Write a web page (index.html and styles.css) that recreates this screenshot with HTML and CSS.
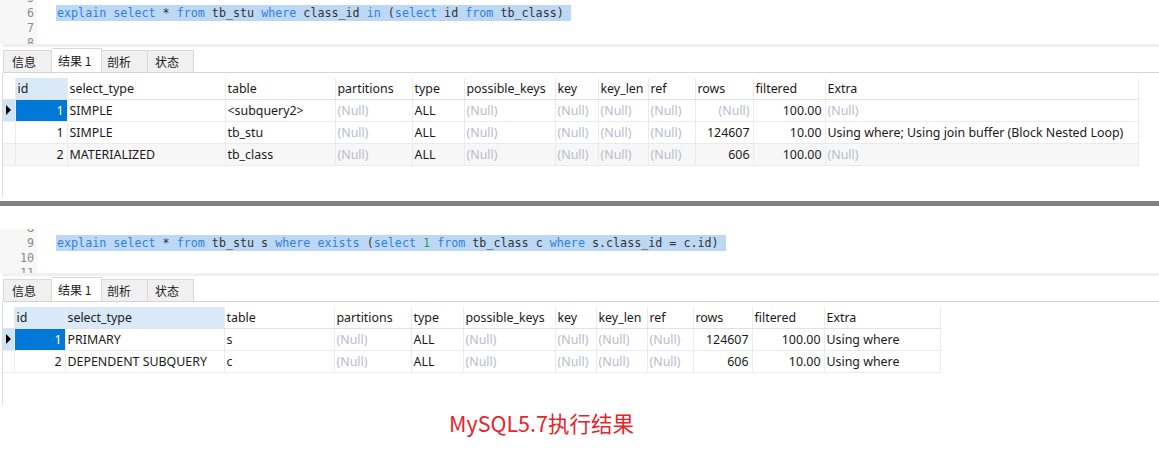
FILE: index.html
```html
<!DOCTYPE html>
<html>
    <head>
        <meta charset="utf-8">
        <title>explain 执行结果</title>
        <link rel="stylesheet" href="styles.css">
    </head>
    <body>

        <div class="panel p1">
            <div class="editor">
                <div class="lines">
                    <div class="line"><span class="num">5</span><span class="code"></span></div>
                    <div class="line"><span class="num">6</span><span class="code"><span class="sel"><b>explain</b> <b>select</b> * <b>from</b> tb_stu <b>where</b> class_id <b>in</b> (<b>select</b> id <b>from</b> tb_class) </span></span></div>
                    <div class="line"><span class="num">7</span><span class="code"></span></div>
                    <div class="line"><span class="num">8</span><span class="code"></span></div>
                </div>
            </div>
            <div class="band"></div>
            <div class="tabs">
                <span class="tab t1">信息</span>
                <span class="tab t2 on">结果 1</span>
                <span class="tab t3">剖析</span>
                <span class="tab t4">状态</span>
            </div>
            <div class="result">
                <table class="grid g1">
                    <colgroup>
                        <col style="width:12px"><col style="width:52px"><col style="width:158px"><col style="width:110px">
                        <col style="width:77px"><col style="width:52px"><col style="width:91px"><col style="width:43px">
                        <col style="width:50px"><col style="width:47px"><col style="width:58px"><col style="width:72px">
                        <col style="width:313px">
                    </colgroup>
                    <thead>
                        <tr>
                            <th class="ind"></th><th class="hl">id</th><th>select_type</th><th>table</th><th>partitions</th><th>type</th>
                            <th>possible_keys</th><th>key</th><th>key_len</th><th>ref</th><th>rows</th><th>filtered</th><th>Extra</th>
                        </tr>
                    </thead>
                    <tbody>
                        <tr>
                            <td class="ind cur-row"><span class="arrow"></span></td><td class="r cur">1</td><td>SIMPLE</td><td>&lt;subquery2&gt;</td>
                            <td class="n">(Null)</td><td>ALL</td><td class="n">(Null)</td><td class="n">(Null)</td><td class="n">(Null)</td>
                            <td class="n">(Null)</td><td class="r n">(Null)</td><td class="r">100.00</td><td class="n">(Null)</td>
                        </tr>
                        <tr>
                            <td class="ind"></td><td class="r">1</td><td>SIMPLE</td><td>tb_stu</td>
                            <td class="n">(Null)</td><td>ALL</td><td class="n">(Null)</td><td class="n">(Null)</td><td class="n">(Null)</td>
                            <td class="n">(Null)</td><td class="r">124607</td><td class="r">10.00</td><td>Using where; Using join buffer (Block Nested Loop)</td>
                        </tr>
                        <tr class="alt">
                            <td class="ind"></td><td class="r">2</td><td>MATERIALIZED</td><td>tb_class</td>
                            <td class="n">(Null)</td><td>ALL</td><td class="n">(Null)</td><td class="n">(Null)</td><td class="n">(Null)</td>
                            <td class="n">(Null)</td><td class="r">606</td><td class="r">100.00</td><td class="n">(Null)</td>
                        </tr>
                    </tbody>
                </table>
            </div>
        </div>

        <div class="divider"></div>

        <div class="panel p2">
            <div class="editor">
                <div class="lines">
                    <div class="line"><span class="num">8</span><span class="code"></span></div>
                    <div class="line"><span class="num">9</span><span class="code"><span class="sel"><b>explain</b> <b>select</b> * <b>from</b> tb_stu s <b>where</b> <b>exists</b> (<b>select</b> <i>1</i> <b>from</b> tb_class c <b>where</b> s.class_id = c.id) </span></span></div>
                    <div class="line"><span class="num">10</span><span class="code"></span></div>
                    <div class="line"><span class="num">11</span><span class="code"></span></div>
                </div>
            </div>
            <div class="band"></div>
            <div class="tabs">
                <span class="tab t1">信息</span>
                <span class="tab t2 on">结果 1</span>
                <span class="tab t3">剖析</span>
                <span class="tab t4">状态</span>
            </div>
            <div class="result">
                <table class="grid g2">
                    <colgroup>
                        <col style="width:11px"><col style="width:51px"><col style="width:159px"><col style="width:110px">
                        <col style="width:77px"><col style="width:52px"><col style="width:92px"><col style="width:41px">
                        <col style="width:51px"><col style="width:46px"><col style="width:59px"><col style="width:72px">
                        <col style="width:116px">
                    </colgroup>
                    <thead>
                        <tr>
                            <th class="ind"></th><th class="hl">id</th><th class="hl">select_type</th><th>table</th><th>partitions</th><th>type</th>
                            <th>possible_keys</th><th>key</th><th>key_len</th><th>ref</th><th>rows</th><th>filtered</th><th>Extra</th>
                        </tr>
                    </thead>
                    <tbody>
                        <tr>
                            <td class="ind cur-row"><span class="arrow"></span></td><td class="r cur">1</td><td>PRIMARY</td><td>s</td>
                            <td class="n">(Null)</td><td>ALL</td><td class="n">(Null)</td><td class="n">(Null)</td><td class="n">(Null)</td>
                            <td class="n">(Null)</td><td class="r">124607</td><td class="r">100.00</td><td>Using where</td>
                        </tr>
                        <tr>
                            <td class="ind"></td><td class="r">2</td><td>DEPENDENT SUBQUERY</td><td>c</td>
                            <td class="n">(Null)</td><td>ALL</td><td class="n">(Null)</td><td class="n">(Null)</td><td class="n">(Null)</td>
                            <td class="n">(Null)</td><td class="r">606</td><td class="r">10.00</td><td>Using where</td>
                        </tr>
                    </tbody>
                </table>
            </div>
        </div>

        <p class="caption">MySQL5.7执行结果</p>

    </body>
</html>
```

FILE: styles.css
```css
* {
    box-sizing: border-box;
}

body {
    margin: 0;
    background: #fff;
    color: #1a1a1a;
    font-family: "Noto Sans", "Noto Sans CJK SC", sans-serif;
    font-size: 12.4px;
}

/* sql editor */
.editor {
    height: 44px;
    overflow: hidden;
}

.lines {
    margin-top: -9px;
}

.p2 .lines {
    margin-top: -8px;
}

.line {
    display: flex;
    height: 15px;
    line-height: 15px;
    font-family: "DejaVu Sans Mono", monospace;
    font-size: 11.7px;
}

.num {
    flex: none;
    width: 37px;
    padding-right: 3px;
    text-align: right;
    color: #8c8c8c;
    background: #f7f7f7;
}

.code {
    padding-left: 19px;
    white-space: pre;
    color: #333;
}

.sel {
    background: #bdd8f5;
    padding: 1px 0 1px 1px;
}

.code b {
    font-weight: normal;
    color: #2f7fe6;
}

.code i {
    font-style: normal;
    color: #22a33a;
}

.band {
    height: 3px;
    margin-left: 3px;
    background: #f0f0f0;
}

/* tabs */
.tabs {
    display: flex;
    align-items: flex-end;
    height: 26px;
    margin-left: 3px;
    border-bottom: 1px solid #d4d4d4;
}

.tab {
    height: 22px;
    line-height: 21px;
    padding-left: 7px;
    background: #f0f0f0;
    border: 1px solid #d9d9d9;
    border-bottom: 0;
    font-family: "Noto Sans CJK SC", sans-serif;
    font-size: 12px;
}

.tab + .tab {
    border-left: 0;
}

.t1 { width: 49px; padding-left: 8px; }
.t2 { width: 50px; padding-left: 6px; }
.t3 { width: 46px; padding-left: 5px; }
.t4 { width: 46px; padding-left: 7px; }

.tab.on {
    height: 24px;
    line-height: 23px;
    background: #fff;
}

/* result grid */
.result {
    height: 124px;
    margin-left: 2px;
    padding-top: 5px;
    border-left: 1px solid #dcdcdc;
}

.p2 .result {
    height: 103px;
}

.grid {
    border-collapse: collapse;
    table-layout: fixed;
}

.g1 { width: 1135px; }
.g2 { width: 937px; }

.grid th,
.grid td {
    padding: 0 3px 0 2px;
    border: 1px solid #ebebeb;
    white-space: nowrap;
    overflow: hidden;
    text-align: left;
    font-weight: normal;
}

.grid th {
    border-top: 0;
    border-bottom-color: #e2e2e2;
}

.grid th:first-child,
.grid td:first-child {
    border-left: 0;
}

.grid thead tr {
    height: 21px;
}

.grid tbody tr {
    height: 22px;
}

.grid .ind {
    padding: 0;
}

.grid .hl {
    background: #d9e9f8;
}

.grid .cur-row {
    background: #cfe4f7;
}

.grid .cur {
    background: #0078d7;
    color: #fff;
}

.grid .r {
    text-align: right;
}

.grid .n {
    color: #b9bccb;
}

.grid .alt td {
    background: #f7f7f7;
}

.arrow {
    display: block;
    width: 0;
    height: 0;
    margin-left: 3px;
    border-left: 5px solid #000;
    border-top: 5px solid transparent;
    border-bottom: 5px solid transparent;
}

.divider {
    height: 5px;
    margin: 4px 0 23px;
    background: #808080;
}

.caption {
    margin: 4px 0 0 449px;
    line-height: 28px;
    color: #e8232b;
    font-family: "Noto Sans CJK SC", sans-serif;
    font-size: 21.5px;
}
```
